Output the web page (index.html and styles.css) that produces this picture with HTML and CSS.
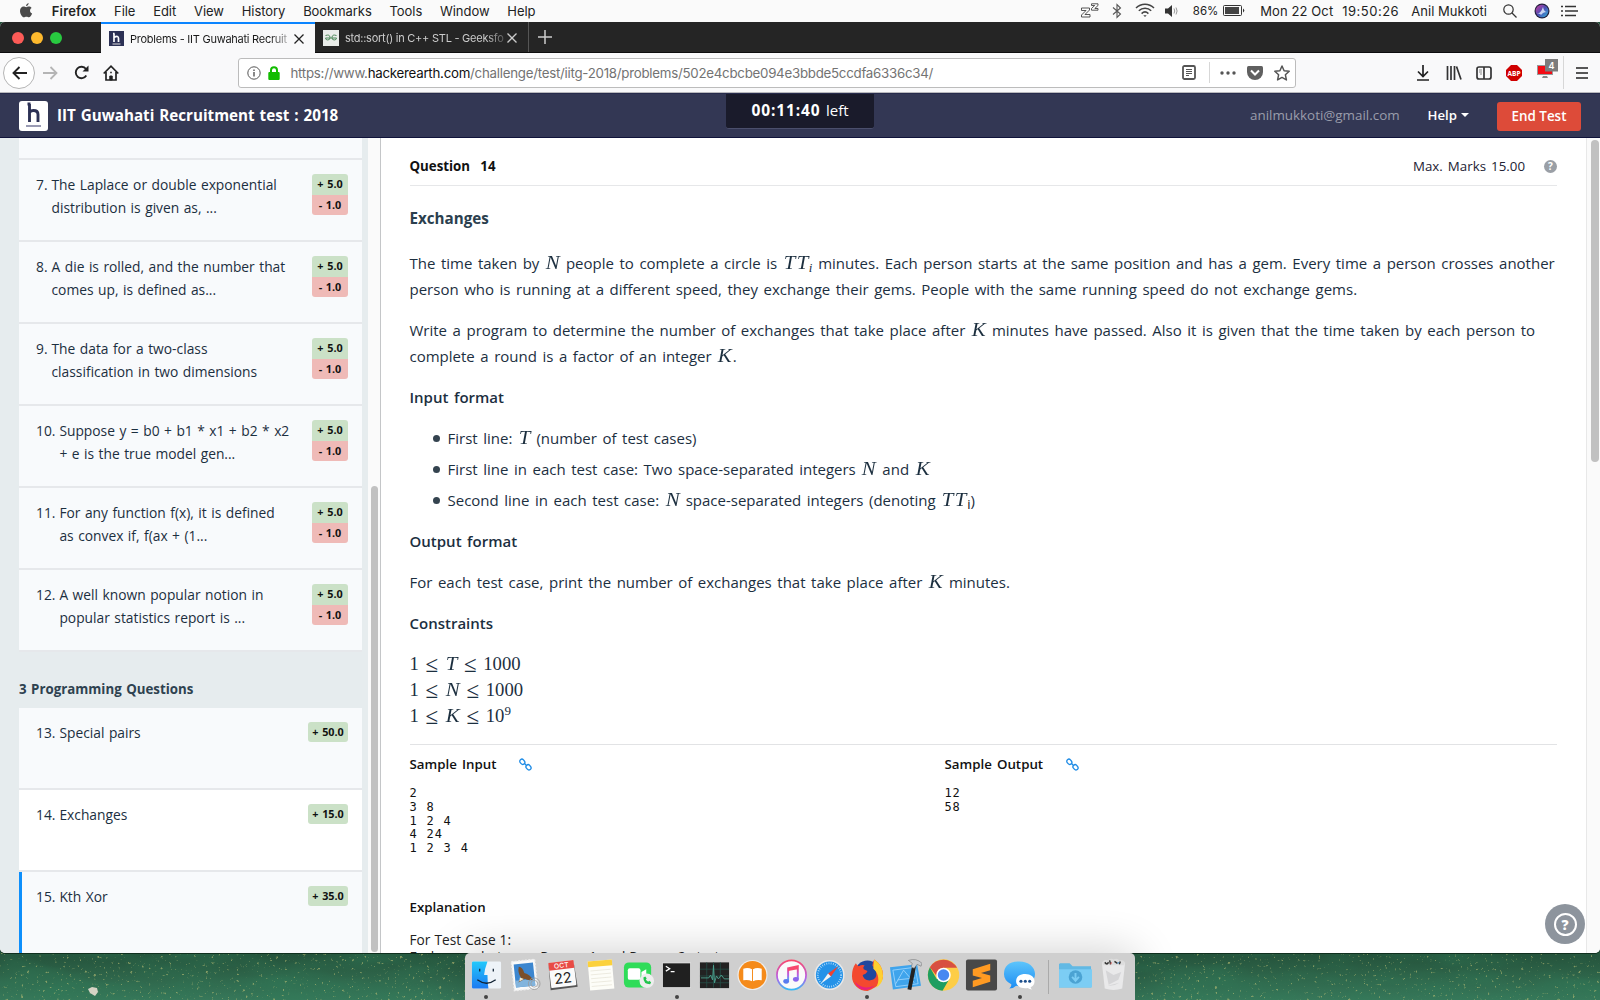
FILE: index.html
```html
<!DOCTYPE html>
<html lang="en">
<head>
<meta charset="utf-8">
<title>Problems - IIT Guwahati Recruitment test</title>
<link rel="stylesheet" href="styles.css">
</head>
<body>
<div class="desktop">
  <svg class="wallpaper" width="1600" height="47" viewBox="0 0 1600 47">
    <defs>
      <linearGradient id="green" x1="0" y1="0" x2="0" y2="1"><stop offset="0" stop-color="#24523b"/><stop offset=".35" stop-color="#2b5f45"/><stop offset="1" stop-color="#37785a"/></linearGradient>
      <filter id="specks" x="0" y="0" width="100%" height="100%"><feTurbulence type="fractalNoise" baseFrequency=".33" numOctaves="2" seed="8"/><feColorMatrix values="0 0 0 0 .5  0 0 0 0 .52  0 0 0 0 .18  7 0 0 0 -4.700"/></filter>
      <filter id="cloud" x="0" y="0" width="100%" height="100%"><feTurbulence type="fractalNoise" baseFrequency=".012 .04" numOctaves="3" seed="3"/><feColorMatrix values="0 0 0 0 .03  0 0 0 0 .2  0 0 0 0 .1  2 0 0 0 -.75"/></filter>
    </defs>
    <rect width="1600" height="47" fill="url(#green)"/>
    <rect width="1600" height="47" filter="url(#cloud)" opacity=".5"/>
    <rect width="1600" height="47" filter="url(#specks)" opacity=".6"/>
    <path d="M88 36l4-2 5 1 1 4-3 4-5-3z" fill="#d5d3c4"/>
  </svg>

  <div class="menubar">
    <svg class="apple" width="14" height="16" viewBox="0 0 14 16"><path fill="#4a4a4a" d="M9.6 0c.1 1.300-.9 2.900-2.500 3.200C6.900 1.700 8.200.300 9.600 0zM7.200 4.200c.7 0 1.500-.7 2.700-.7 1 0 2 .5 2.700 1.400-2.300 1.400-1.900 4.500.5 5.500-.5 1.400-1.900 3.900-3.200 3.900-.9 0-1.300-.5-2.500-.5s-1.600.5-2.500.5C3.300 14.400 1 10.900 1 8c0-2.800 1.800-4.400 3.500-4.400 1.100 0 2 .6 2.700.6z"/></svg>
    <b class="m m-app">Firefox</b><span class="m">File</span><span class="m">Edit</span><span class="m">View</span><span class="m">History</span><span class="m">Bookmarks</span><span class="m">Tools</span><span class="m">Window</span><span class="m">Help</span>
    <div class="status">
      <svg width="18" height="15" viewBox="0 0 18 15" fill="none" stroke="#444" stroke-width=".9"><path d="M.5 5h8v2L4 11.500h5V14H.5v-2L5 7.500H.5zM10.500.8h6.500v1.700L13.800 5.500H17v1.700h-6.500V5.500l3.200-3h-3.200z"/></svg>
      <svg width="10" height="16" viewBox="0 0 10 16" fill="none" stroke="#555" stroke-width="1.100"><path d="M1 4.500l7.500 6.500L5 14.500v-13L8.500 5 1 11.500"/></svg>
      <svg width="20" height="15" viewBox="0 0 20 15" fill="none" stroke="#444" stroke-width="1.500"><path d="M1 5c5-5 13-5 18 0M3.800 7.800c3.500-3.500 9-3.500 12.400 0M6.600 10.600c2-2 4.800-2 6.800 0"/><path d="M8.300 12.200h3.400L10 14z" fill="#444" stroke="none"/></svg>
      <svg width="14" height="12" viewBox="0 0 14 12"><path d="M0 3.500h3L7 0v12L3 8.500H0z" fill="#333"/><path d="M9 3.500q1.500 2.500 0 5M11 2.500q2.200 3.500 0 7" fill="none" stroke="#999"/></svg>
      <span class="pct">86%</span>
      <svg width="22" height="11" viewBox="0 0 22 11"><rect x=".5" y=".5" width="18" height="10" rx="1" fill="none" stroke="#333"/><rect x="2" y="2" width="14" height="7" fill="#444"/><path d="M20 3.500q2.500 2 0 4z" fill="#333"/></svg>
      <span class="m date">Mon 22 Oct</span><span class="m time">19:50:26</span><span class="m user">Anil Mukkoti</span>
      <svg width="14" height="14" viewBox="0 0 14 14" fill="none" stroke="#333" stroke-width="1.200"><circle cx="5.500" cy="5.500" r="4.700"/><path d="M9 9l4.500 4.500"/></svg>
      <svg width="16" height="16" viewBox="0 0 16 16"><defs><linearGradient id="siri" x1="0" y1="0" x2="1" y2="1"><stop offset="0" stop-color="#d33a9c"/><stop offset=".5" stop-color="#4a4fb5"/><stop offset="1" stop-color="#2fb4d8"/></linearGradient></defs><circle cx="8" cy="8" r="7.500" fill="#23213f"/><circle cx="8" cy="8" r="6.300" fill="url(#siri)"/><path d="M3 11q4-1 6-7 1 5 4 5-4 0-6 3-1-2-4-1z" fill="#e8f3ff" opacity=".8"/></svg>
      <svg width="17" height="12" viewBox="0 0 17 12" stroke="#333" stroke-width="1.500"><path d="M0 1.500h2M4 1.500h11M0 6h2M4 6h13M0 10.500h2M4 10.500h11"/></svg>
    </div>
  </div>

  <div class="window">
    <div class="tabs">
      <div class="lights"><i class="red"></i><i class="yellow"></i><i class="lime"></i></div>
      <div class="tab tab-on">
        <svg width="15" height="15" viewBox="0 0 15 15"><rect width="15" height="15" fill="#2c3155"/><path d="M5 11V2.500M4 2.500h1.500M5 6.500q4.500-2.500 4.500 1V11" fill="none" stroke="#fff" stroke-width="1.700"/><path d="M3.500 13h8" stroke="#ddd"/></svg>
        <span class="tab-t">Problems - IIT Guwahati Recruit</span>
        <svg class="x" width="10" height="10" viewBox="0 0 10 10" stroke="#222" stroke-width="1.300"><path d="M.5.5l9 9M9.500.5l-9 9"/></svg>
      </div>
      <div class="tab tab-off">
        <svg width="16" height="16" viewBox="0 0 16 16"><rect width="16" height="16" fill="#e9ece9"/><path d="M2.500 5.500q4.500-1.500 4.500 2 0 2.500-2.200 2.500T2.500 8h11q0 2-2.300 2T9 7.500q0-3.500 4.500-2" fill="none" stroke="#4f8a5c"/></svg>
        <span class="tab-t">std::sort() in C++ STL - Geeksfo</span>
        <svg class="x" width="10" height="10" viewBox="0 0 10 10" stroke="#ccc" stroke-width="1.300"><path d="M.5.5l9 9M9.500.5l-9 9"/></svg>
      </div>
      <svg class="plus" width="14" height="14" viewBox="0 0 14 14" stroke="#ccc" stroke-width="1.500"><path d="M7 0v14M0 7h14"/></svg>
    </div>

    <div class="toolbar">
      <div class="nav">
        <span class="back"><svg width="15" height="14" viewBox="0 0 15 14" fill="none" stroke="#222" stroke-width="1.900"><path d="M15 7H1.500M7.500 1l-6 6 6 6"/></svg></span>
        <svg width="15" height="14" viewBox="0 0 15 14" fill="none" stroke="#b5b5b5" stroke-width="1.800"><path d="M0 7h13.500M7.500 1l6 6-6 6"/></svg>
        <svg width="15" height="15" viewBox="0 0 15 15" fill="none" stroke="#222" stroke-width="1.900"><path d="M12.300 10.500A5.700 5.700 0 1 1 12 4"/><path d="M14.500.5v6h-6z" fill="#222" stroke="none"/></svg>
        <svg width="16" height="16" viewBox="0 0 16 16" fill="none" stroke="#222" stroke-width="1.700"><path d="M.7 8.500L8 1.200l7.300 7.300M3 7v8h10V7"/><path d="M6.800 15v-4h2.400v4z" fill="#222" stroke-width="1"/><path d="M7.200 7.500h1.600"/></svg>
      </div>
      <div class="urlbar">
        <svg width="14" height="14" viewBox="0 0 14 14" fill="none" stroke="#555"><circle cx="7" cy="7" r="6.200"/><path d="M7 6v4.500M7 3.500v1.400" stroke-width="1.400"/></svg>
        <svg class="lock" width="12" height="14" viewBox="0 0 12 14"><path d="M3 7V4.200a3 3 0 0 1 6 0V7" fill="none" stroke="#12bc00" stroke-width="2"/><rect x=".3" y="6" width="11.400" height="8" rx="1" fill="#12bc00"/></svg>
        <span class="url">https://www.<em>hackerearth.com</em>/challenge/test/iitg-2018/problems/502e4cbcbe094e3bbde5ccdfa6336c34/</span>
        <div class="url-actions">
          <svg width="14" height="15" viewBox="0 0 14 15" fill="none" stroke="#555"><rect x="1" y="1" width="12" height="13" rx="1.500" stroke-width="1.800"/><path d="M4 4.500h6M4 6.500h6M4 8.500h6M4 10.500h3"/></svg>
          <i class="vsep"></i>
          <svg width="16" height="4" viewBox="0 0 16 4" fill="#555"><circle cx="2" cy="2" r="1.700"/><circle cx="8" cy="2" r="1.700"/><circle cx="14" cy="2" r="1.700"/></svg>
          <svg width="16" height="14" viewBox="0 0 16 14"><path d="M1.500 0h13Q16 0 16 1.500V6a8 8 0 0 1-16 0V1.500Q0 0 1.500 0z" fill="#606060"/><path d="M4 4.500l4 4 4-4" fill="none" stroke="#fff" stroke-width="2"/></svg>
          <svg width="16" height="16" viewBox="0 0 16 16" fill="none" stroke="#555" stroke-width="1.500" stroke-linejoin="round"><path d="M8 1l2.100 4.700 5.100.6-3.800 3.500 1 5.100L8 12.400l-4.400 2.500 1-5.100L.8 6.300l5.100-.6z"/></svg>
        </div>
      </div>
      <div class="tools">
        <svg width="12" height="16" viewBox="0 0 12 16" fill="none" stroke="#222" stroke-width="1.700"><path d="M6 0v11M1 6.500l5 5 5-5M0 15h12"/></svg>
        <svg width="16" height="14" viewBox="0 0 16 14" fill="none" stroke="#333" stroke-width="1.700"><path d="M1.500 0v14M5 0v14M8.500 0v14M10.500.5L15 13.500"/></svg>
        <svg width="16" height="14" viewBox="0 0 16 14" fill="none" stroke="#333" stroke-width="1.700"><rect x="1" y="1" width="14" height="12" rx="2"/><path d="M8 1v12"/><path d="M3 4h3M3 6h3M4 8h2" stroke-width="1" stroke="#888"/></svg>
        <svg width="16" height="16" viewBox="0 0 16 16"><path d="M5 0h6l5 5v6l-5 5H5l-5-5V5z" fill="#d00000"/><text class="abp" x="8" y="10.600" text-anchor="middle">ABP</text></svg>
        <svg class="mon" width="22" height="22" viewBox="0 0 22 22"><rect x=".5" y="6.500" width="15" height="9" fill="#f40b14" stroke="#999"/><path d="M6 17h4l1 2H5z" fill="#888"/><rect x="8" y="0" width="13" height="12.500" fill="#7c7c7c"/><text class="count" x="14.500" y="9.600" text-anchor="middle">4</text></svg>
        <i class="vsep tall"></i>
        <svg class="burger" width="12" height="12" viewBox="0 0 12 12" stroke="#222" stroke-width="1.700"><path d="M0 1h12M0 6h12M0 11h12"/></svg>
      </div>
    </div>

    <header class="header">
      <svg class="logo" width="29" height="30" viewBox="0 0 29 30"><rect width="29" height="30" rx="3" fill="#fff"/><path d="M10.500 21V3M8.500 3h3M10.500 11.500q1-2 4-2 4.500 0 4.500 4V21" fill="none" stroke="#2c3155" stroke-width="2.900"/><path d="M7 25h15" stroke="#77789a" stroke-width="1.500"/></svg>
      <b class="h-title">IIT Guwahati Recruitment test : 2018</b>
      <div class="timer"><b>00:11:40</b> left</div>
      <div class="h-right">
        <span class="email">anilmukkoti@gmail.com</span>
        <span class="help">Help<i class="caret"></i></span>
        <span class="end">End Test</span>
      </div>
    </header>

    <div class="body">
      <aside class="side">
        <div class="cards">
          <div class="card stub"></div>
          <div class="card"><span class="num">7.</span><p>The Laplace or double exponential<br>distribution is given as, ...</p><div class="badge"><b>+ 5.0</b><b class="neg">- 1.0</b></div></div>
          <div class="card"><span class="num">8.</span><p>A die is rolled, and the number that<br>comes up, is defined as...</p><div class="badge"><b>+ 5.0</b><b class="neg">- 1.0</b></div></div>
          <div class="card"><span class="num">9.</span><p>The data for a two-class<br>classification in two dimensions</p><div class="badge"><b>+ 5.0</b><b class="neg">- 1.0</b></div></div>
          <div class="card"><span class="num">10.</span><p>Suppose y = b0 + b1 * x1 + b2 * x2<br>+ e is the true model gen...</p><div class="badge"><b>+ 5.0</b><b class="neg">- 1.0</b></div></div>
          <div class="card"><span class="num">11.</span><p>For any function f(x), it is defined<br>as convex if, f(ax + (1...</p><div class="badge"><b>+ 5.0</b><b class="neg">- 1.0</b></div></div>
          <div class="card"><span class="num">12.</span><p>A well known popular notion in<br>popular statistics report is ...</p><div class="badge"><b>+ 5.0</b><b class="neg">- 1.0</b></div></div>
          <h2 class="group">3 Programming Questions</h2>
          <div class="card"><span class="num">13.</span><p>Special pairs</p><div class="badge wide"><b>+ 50.0</b></div></div>
          <div class="card card-on"><span class="num">14.</span><p>Exchanges</p><div class="badge wide"><b>+ 15.0</b></div></div>
          <div class="card card-next"><span class="num">15.</span><p>Kth Xor</p><div class="badge wide"><b>+ 35.0</b></div></div>
        </div>
        <div class="track"><div class="thumb thumb-side"></div></div>
      </aside>

      <main class="main">
        <div class="q-head"><b>Question &nbsp;14</b><div class="marks">Max. Marks 15.00<i class="q">?</i></div></div>
        <h3 class="first">Exchanges</h3>
        <p>The time taken by <i class="v n">N</i> people to complete a circle is <i class="v t">T</i><i class="v t">T</i><sub class="v i">i</sub> minutes. Each person starts at the same position and has a gem. Every time a person crosses another<br>person who is running at a different speed, they exchange their gems. People with the same running speed do not exchange gems.</p>
        <p>Write a program to determine the number of exchanges that take place after <i class="v n">K</i> minutes have passed. Also it is given that the time taken by each person to<br>complete a round is a factor of an integer <i class="v n">K</i>.</p>
        <h3>Input format</h3>
        <ul>
          <li>First line: <i class="v t">T</i> (number of test cases)</li>
          <li>First line in each test case: Two space-separated integers <i class="v n">N</i> and <i class="v n">K</i></li>
          <li>Second line in each test case: <i class="v n">N</i> space-separated integers (denoting <i class="v t">T</i><i class="v t">T</i><sub class="s">i</sub>)</li>
        </ul>
        <h3>Output format</h3>
        <p>For each test case, print the number of exchanges that take place after <i class="v n">K</i> minutes.</p>
        <h3>Constraints</h3>
        <p class="math">1<i class="le">≤</i><i class="v t">T</i><i class="le">≤</i>1000<br>1<i class="le">≤</i><i class="v n">N</i><i class="le">≤</i>1000<br>1<i class="le">≤</i><i class="v n">K</i><i class="le">≤</i>10<sup>9</sup></p>
        <div class="samples">
          <section><h4>Sample Input<svg width="13" height="13" viewBox="0 0 13 13" fill="none" stroke="#1f8ce6" stroke-width="1.300"><rect x="1.200" y="1" width="4.200" height="5.600" rx="2.100" transform="rotate(-40 3.300 3.800)"/><rect x="7.400" y="6.500" width="4.200" height="5.600" rx="2.100" transform="rotate(-40 9.500 9.300)"/><path d="M5 5l3 3"/></svg></h4>
<pre>2
3 8
1 2 4
4 24
1 2 3 4</pre></section>
          <section><h4>Sample Output<svg width="13" height="13" viewBox="0 0 13 13" fill="none" stroke="#1f8ce6" stroke-width="1.300"><rect x="1.200" y="1" width="4.200" height="5.600" rx="2.100" transform="rotate(-40 3.300 3.800)"/><rect x="7.400" y="6.500" width="4.200" height="5.600" rx="2.100" transform="rotate(-40 9.500 9.300)"/><path d="M5 5l3 3"/></svg></h4>
<pre>12
58</pre></section>
        </div>
        <h4 class="expl">Explanation</h4>
        <div class="cases">For Test Case 1:<br>Exchanges between Person 1 and Person 2 start</div>
      </main>
      <div class="track track-main"><div class="thumb thumb-main"></div></div>
    </div>
    <div class="fab"><span>?</span></div>
  </div>

  <div class="dock">
    <span class="app run"><svg viewBox="0 0 34 34"><defs><linearGradient id="fd" x1="0" y1="0" x2="0" y2="1"><stop offset="0" stop-color="#22c9fb"/><stop offset="1" stop-color="#1d7af2"/></linearGradient></defs><rect x="2" y="3" width="30" height="28" rx="1.500" fill="#eef3f8"/><path d="M3.500 3H18q-3 8-3.500 14H18q0 7 1 14H3.500Q2 31 2 29.500v-25Q2 3 3.500 3z" fill="url(#fd)"/><path d="M10 10.500v3M24 10.500v3M7.500 22q9.500 7 19 0" fill="none" stroke="#123" stroke-width="1.300"/></svg></span>
    <span class="app"><svg viewBox="0 0 34 34"><g transform="rotate(-6 17 17)"><rect x="5" y="2" width="24" height="30" fill="#fafafa" stroke="#eee" stroke-dasharray="2 1.500" stroke-width="1.500"/><rect x="7" y="5" width="20" height="24" fill="#3c86cf"/><path d="M7 22h20v7H7z" fill="#82b4dd"/><path d="M12 8q4 1 5 7 6 2 8 8-6 0-8-2l-7 3 3-5q-3-5-1-11z" fill="#7b4f2a"/><path d="M12 19l4 2-5 2z" fill="#f2e8cc"/></g><circle cx="27" cy="26" r="6" fill="none" stroke="#999" stroke-width=".8"/><circle cx="27" cy="26" r="3.500" fill="none" stroke="#999" stroke-width=".8"/></svg></span>
    <span class="app"><svg viewBox="0 0 34 34"><g transform="rotate(-7 17 17)"><path d="M4 4h26l1 27H3z" fill="#555"/><rect x="4" y="3" width="26" height="26" rx="1" fill="#fafafa"/><path d="M4 3h26v8H4z" fill="#e84b45"/><text class="month" x="17" y="9.600" text-anchor="middle">OCT</text><text class="day" x="17" y="25.500" text-anchor="middle">22</text></g></svg></span>
    <span class="app"><svg viewBox="0 0 34 34"><g transform="rotate(-5 17 17)"><rect x="5" y="2" width="25" height="30" fill="#fdfdf8"/><rect x="5" y="2" width="25" height="6" fill="#fbd13c"/><path d="M7 12h21M7 16h21M7 20h21M7 24h21M7 28h21" stroke="#e6e2d6" stroke-width=".7"/></g></svg></span>
    <span class="app"><svg viewBox="0 0 34 34"><rect x="2" y="4" width="28" height="26" rx="5" fill="#2fdc59"/><rect x="6" y="10" width="13" height="12" rx="2" fill="#fff"/><path d="M20 14l5-3v10l-5-3z" fill="#fff"/><circle cx="25.500" cy="23" r="7.500" fill="#eee"/><path d="M22 19.500q0 7 7 7l1-2-2-1.500-1 1q-2-1-2.500-2.500l1-1-1.500-2z" fill="#22c44d"/></svg></span>
    <span class="app run"><svg viewBox="0 0 34 34"><rect x="2" y="4" width="30" height="26.500" fill="#ddd"/><rect x="3" y="5" width="28" height="24.500" fill="#202020"/><path d="M6 8l4 2.500L6 13M11 13.500h4" fill="none" stroke="#fff" stroke-width="1.300"/></svg></span>
    <span class="app"><svg viewBox="0 0 34 34"><rect x="2" y="4" width="30" height="26.500" fill="#222"/><path d="M2 11h30M2 18h30M2 25h30M9 4v26M16 4v26M23 4v26" stroke="#245048" stroke-width=".8"/><path d="M3 20h8l2-3 2 5 1-15 1 18 2-7 2 3 3-4 3 4h5" fill="none" stroke="#4da793" stroke-width=".9"/></svg></span>
    <span class="app"><svg viewBox="0 0 34 34"><circle cx="17" cy="17" r="15.500" fill="#eee"/><circle cx="17" cy="17" r="14.300" fill="#f58b1b"/><path d="M16.500 11q-4-2-9-.5v12q5-1 9 1zM17.500 11q4-2 9-.5v12q-5-1-9 1z" fill="#fff"/></svg></span>
    <span class="app"><svg viewBox="0 0 34 34"><defs><linearGradient id="it" x1="0" y1="0" x2="0" y2="1"><stop offset="0" stop-color="#f9486c"/><stop offset=".6" stop-color="#b760e8"/><stop offset="1" stop-color="#37b9f4"/></linearGradient></defs><circle cx="17" cy="17" r="15" fill="#fafafa" stroke="url(#it)" stroke-width="1.800"/><path d="M13.500 23V10l10-2v13" fill="none" stroke="url(#it)" stroke-width="2"/><path d="M13.500 10l10-2v3l-10 2z" fill="#f9486c"/><ellipse cx="11.500" cy="23.500" rx="3" ry="2.500" fill="#5a7bf0"/><ellipse cx="21.500" cy="21.500" rx="3" ry="2.500" fill="#8a65ec"/></svg></span>
    <span class="app"><svg viewBox="0 0 34 34"><circle cx="17" cy="17" r="15.500" fill="#e8e8e8"/><circle cx="17" cy="17" r="14" fill="#2492e8"/><circle cx="17" cy="17" r="12" fill="none" stroke="#bfe2fb" stroke-dasharray=".8 1.500" stroke-width="2"/><path d="M26 8l-7.500 10.500-3-3z" fill="#f0402f"/><path d="M8 26l7.500-10.500 3 3z" fill="#f4f4f4"/></svg></span>
    <span class="app run"><svg viewBox="0 0 34 34"><circle cx="17" cy="15" r="13" fill="#20479e"/><path d="M17 33.500C8 33.500 1 27 1 18Q1 10 5 5q1 2 3 3 3-2 6-1-2 2-1 4l4 2q-1 3-5 4 1 6 8 5.500 7-1 6-8-1-5-4-7 0-4 2-6.500 9 6 9 16.500 0 9.500-16 16z" fill="#f4492f"/><path d="M24 1q9 6 9 17 0 8-8 12.500 4-5 3-11-1-6-5-9 0-5 1-9.500z" fill="#ffcf30"/><path d="M4 24q8 9 20 4-8 7-15 3-4-3-5-7z" fill="#e8207c"/></svg></span>
    <span class="app"><svg viewBox="0 0 34 34"><path d="M1 9l28-3 4 22-29 4z" fill="#3fa4ec"/><path d="M4 12l23-3 3 17-23 3zM15 12l-8 14M15 12l11 13M9 22l18-2" fill="none" stroke="#a8dbff" stroke-width=".8"/><path d="M26 7l-5 25" stroke="#222" stroke-width="4"/><path d="M20 2q8-3 14 3l-1 3-4-2-3 4-3-1 1-4z" fill="#c9ccd0" stroke="#777" stroke-width=".6"/></svg></span>
    <span class="app"><svg viewBox="0 0 34 34"><circle cx="17" cy="17" r="16.200" fill="#fdcd46"/><path d="M3 9a16.200 16.200 0 0 0 13 24.200l7-12.200L10 21z" fill="#1e9e60"/><path d="M3 9A16.200 16.200 0 0 1 31 9.500H17L10 18z" fill="#d84f40"/><circle cx="17" cy="17" r="7.500" fill="#fff"/><circle cx="17" cy="17" r="5.900" fill="#4688f1"/></svg></span>
    <span class="app"><svg viewBox="0 0 34 34"><rect x="1" y="1" width="32" height="32" rx="2" fill="#484848"/><path d="M8 11l18-5.500v6.500L16.500 15l9.500 2.500v6.500L8 29.500V23l9.500-3L8 17.500z" fill="#ff9a22"/></svg></span>
    <span class="app run"><svg viewBox="0 0 34 34"><defs><linearGradient id="ms" x1="0" y1="0" x2="0" y2="1"><stop offset="0" stop-color="#5ec5fb"/><stop offset="1" stop-color="#1c8df3"/></linearGradient></defs><path d="M17 3c9 0 16 5.500 16 13s-7 12.500-16 12.500q-2 0-3.500-.3Q11 31 6.500 31 9 29 8.500 26.500 1 23 1 16 1 3 17 3z" fill="url(#ms)"/><path d="M23 16c5.500 0 9.500 3 9.500 7.500 0 3-1.500 5-4 6q0 1.500 1.500 2.500-3 0-4.500-1.500c-7 1-12-2-12-7S17.500 16 23 16z" fill="#fff"/><g fill="#1d4f8c"><circle cx="18.500" cy="23.500" r="1.600"/><circle cx="23" cy="23.500" r="1.600"/><circle cx="27.500" cy="23.500" r="1.600"/></g></svg></span>
    <i class="dock-sep"></i>
    <span class="app"><svg viewBox="0 0 34 34"><path d="M1 5h10l3 3h19v22H0V6z" fill="#62b9e4"/><path d="M0 11h34v19H0z" fill="#7ccdf4"/><circle cx="17" cy="19" r="7" fill="#4ba3d3"/><path d="M17 15v7M13.500 19l3.500 4 3.500-4" fill="none" stroke="#7ccdf4" stroke-width="2"/></svg></span>
    <span class="app"><svg viewBox="0 0 34 34"><path d="M5 4h24l-3 27q-9 3-18 0z" fill="#e9e9ea"/><path d="M9 12l8 5 8-3-3 8-10 5zM11 28q6 1 12-3" fill="#d5d5d7"/><path d="M5 4q3-4 6-2 3-3 6-1 4-2 6 1 4-1 6 2l-1 3H6z" fill="#ddd"/><path d="M8 4l2 2M13 2l1 4M18 3l3 2M24 3l-1 3M10 6l2-2" stroke="#333" stroke-width="1.500"/><path d="M14 6l1-2" stroke="#d55"/><path d="M21 5l2-1" stroke="#38c"/></svg></span>
  </div>
</div>
</body>
</html>
```
FILE: styles.css
```css
* { box-sizing: border-box; }
body { margin: 0; width: 1600px; height: 1000px; overflow: hidden; font-family: "Open Sans", sans-serif; color: #1c2f3f; }
svg { display: block; flex: none; }
p, h2, h3, h4, ul, pre { margin: 0; padding: 0; font-weight: 400; }

.desktop { position: relative; width: 1600px; height: 1000px; display: flex; flex-direction: column; background: #24523b; }
.wallpaper { position: absolute; left: 0; bottom: 0; }

/* macOS menu bar */
.menubar { height: 22px; flex: none; display: flex; align-items: center; gap: 17.800px; padding: 0 22px 0 19px; background: #fafafa; font: 13px/20px Inter, sans-serif; letter-spacing: -.05px; color: #222; }
.menubar > * { margin-top: -1px; }
.m-app { margin-left: 1px; font-weight: 600; letter-spacing: .15px; }
.m { white-space: nowrap; }
.status { margin-left: auto; display: flex; align-items: center; }
.status > svg:nth-child(1) { margin-right: 13px; }
.status > svg:nth-child(2) { margin-right: 13px; }
.status > svg:nth-child(3) { margin-right: 10px; }
.status > svg:nth-child(4) { margin-right: 14px; }
.pct { font-size: 11.500px; margin-right: 5px; }
.date { margin-left: 15px; letter-spacing: .1px; }
.time { margin-left: 9px; letter-spacing: .5px; }
.user { margin: 0 16px 0 12px; letter-spacing: .05px; }
.status > svg:nth-last-child(2) { margin: 0 11px 0 17px; }

/* browser window */
.window { position: relative; height: 931px; flex: none; display: flex; flex-direction: column; overflow: hidden; border-radius: 5px; background: #fff; box-shadow: 0 1px 0 #10301f; }
.tabs { height: 31px; flex: none; display: flex; background: #252525; border-bottom: 1px solid #0c0c0d; }
.lights { width: 101px; display: flex; gap: 7px; padding: 10px 12px; }
.lights i { width: 12px; height: 12px; border-radius: 50%; }
.red { background: #fc5b57; }
.yellow { background: #fdb92d; }
.lime { background: #28c940; }
.tab { width: 214px; display: flex; align-items: center; padding: 0 11px 0 8px; font: 11px/14px Inter, sans-serif; letter-spacing: -.25px; }
.tab-on { height: 31px; background: #f9f9fa; border-top: 2px solid #0a84ff; color: #1a1a1a; }
.tab-off { color: #ccc; border-right: 1px solid #555; padding-top: 2px; }
.tab-t { width: 159px; margin: 0 0 0 6px; overflow: hidden; white-space: nowrap; -webkit-mask-image: linear-gradient(90deg, #000 88%, transparent 105%); mask-image: linear-gradient(90deg, #000 88%, transparent 105%); }
.x { margin-left: auto; }
.plus { margin: 8px 0 0 9px; }

.toolbar { height: 40px; flex: none; display: flex; align-items: center; background: #f9f9fa; border-bottom: 1px solid #b9b9bd; }
.nav { width: 238px; display: flex; align-items: center; padding-left: 3px; }
.back { width: 32px; height: 32px; display: flex; align-items: center; justify-content: center; border: 1px solid #b5b5b5; border-radius: 50%; background: #fff; margin-right: 8px; }
.nav > svg:nth-child(2) { margin-right: 16px; }
.nav > svg:nth-child(3) { margin-right: 14px; }
.urlbar { width: 1058px; height: 30px; display: flex; align-items: center; padding: 0 5px 0 8px; border: 1px solid #bcbcbc; border-radius: 3px; background: #fff; }
.lock { margin: 0 10.500px 0 7px; }
.url { font: 13.300px/18px Inter, sans-serif; letter-spacing: -.26px; color: #737373; white-space: nowrap; }
.url em { font-style: normal; color: #111; }
.url-actions { margin-left: auto; display: flex; align-items: center; gap: 10.800px; }
.vsep { width: 1px; height: 21px; background: #d7d7d7; margin: 0 0 0 2px; }
.tools { flex: 1; display: flex; align-items: center; }
.tools > :nth-child(1) { margin-left: 121px; }
.tools > :nth-child(2) { margin-left: 17px; }
.tools > :nth-child(3) { margin-left: 14px; }
.tools > :nth-child(4) { margin-left: 14px; }
.tools > .mon { margin: -6px 0 0 15px; }
.abp { font: 700 6.600px "Open Sans", sans-serif; fill: #fff; }
.count { font: 600 9px Inter, sans-serif; fill: #fff; }
.tall { height: 33px; margin-left: 4px; }
.burger { margin-left: 12px; }

/* test header */
.header { height: 45px; flex: none; display: flex; align-items: center; background: #333754; border-bottom: 1px solid #10133a; border-top: 1px solid #272b4c; color: #fff; position: relative; }
.logo { margin: 0 9px 0 19px; }
.h-title { font-size: 15.200px; word-spacing: 1px; white-space: nowrap; margin-top: -2px; }
.timer { position: absolute; left: 726px; top: 0; width: 148px; height: 35px; border-radius: 0 0 3px 3px; background: #1a1b2b; border-bottom: 1px solid #4b4f6c; text-align: center; font-size: 15px; line-height: 33px; white-space: nowrap; word-spacing: 1.500px; }
.timer b { font-size: 15.500px; letter-spacing: .9px; }
.h-right { margin-left: auto; display: flex; align-items: center; padding-right: 19px; font-size: 13.400px; }
.email { color: #9a9dab; margin-top: -2px; }
.help { display: flex; align-items: center; margin: -2px 28px 0 28px; font-weight: 600; font-size: 13.200px; }
.caret { border: 4.500px solid transparent; border-top-color: #fff; border-bottom: 0; margin-left: 4px; }
.end { width: 84px; height: 29px; border-radius: 3px; background: #dd4b39; text-align: center; font-weight: 600; line-height: 29px; margin-top: 1px; }

/* columns */
.body { flex: 1; min-height: 0; display: flex; }
.side { width: 381px; flex: none; display: flex; background: #e6ecee; border-right: 1px solid #c4c6c8; }
.cards { width: 343px; margin: 0 6px 0 19px; overflow: hidden; }
.card { height: 82px; flex: none; display: flex; padding: 14px 14px 0 17px; background: #f8fafc; border-bottom: 2px solid #e6e8eb; font-size: 13.800px; line-height: 23px; word-spacing: .900px; white-space: nowrap; }
.card > span, .card > p { margin-top: -1px; }
.stub { height: 22px; }
.num { margin-right: 4px; }
.badge { margin-left: auto; width: 36px; height: 41px; border-radius: 3px; overflow: hidden; font-size: 10.800px; line-height: 20px; text-align: center; color: #111; }
.badge b { display: block; height: 20.500px; background: #cbe1c7; }
.badge .neg { background: #efbab7; }
.badge.wide { width: 40px; height: 20px; }
.group { height: 56px; padding-top: 26px; font-size: 13.300px; line-height: 23px; word-spacing: 1px; font-weight: 700; color: #2e4250; }
.card-on { background: #fff; }
.card-next { border-left: 3px solid #0d8ffb; padding-left: 14px; height: 90px; }
.track { width: 12px; background: #fafafa; display: flex; justify-content: center; }
.thumb { width: 7px; border-radius: 4px; background: #c1c1c1; }
.thumb-side { height: 466px; margin-top: 348px; }

.main { flex: 1; min-width: 0; padding: 0 29px 0 28.500px; font-size: 15px; line-height: 26px; word-spacing: 1.650px; white-space: nowrap; overflow: hidden; }
.q-head { height: 48px; display: flex; justify-content: space-between; align-items: center; padding-top: 9px; border-bottom: 1px solid #e6e7e9; font-size: 13.300px; color: #111; }
.marks { display: flex; align-items: center; color: #223; }
.q { width: 13px; height: 13px; border-radius: 50%; background: #9a9fa6; color: #fff; font: 700 10px/13px "Open Sans", sans-serif; text-align: center; margin-left: 19px; }
.main h3, .main p, .main ul { margin-bottom: 15px; }
.main h3 { font-size: 15px; font-weight: 600; }
.main h3.first { margin: 19px 0 19px; font-weight: 700; color: #2b3f4e; font-size: 15.200px; }
ul { list-style: none; }
li { height: 26px; padding-left: 38px; margin-bottom: 5px; position: relative; }
li::before { content: ""; position: absolute; left: 23px; top: 10px; width: 7px; height: 7px; border-radius: 50%; background: #34434f; }
.v { display: inline-block; font: italic 18.200px/16px "Liberation Serif", serif; }
.n { transform: scaleX(1.150); width: 15.500px; text-align: center; }
.t { width: 13px; text-align: center; transform: scaleX(1.150); }
.i { font-size: 13px; line-height: 4px; width: 4px; vertical-align: -3px; }
.s { font-size: 13px; color: #111; line-height: 0; vertical-align: -3px; }
.math { height: 78px; font: 18.700px/26px "Liberation Serif", serif; }
.le { font: 23px/16px "Liberation Serif", serif; display: inline-block; width: 25.700px; text-align: center; vertical-align: -2px; }
.math sup { font-size: 13px; line-height: 0; vertical-align: 7px; }
.samples { display: grid; grid-template-columns: 535px 1fr; border-top: 1px solid #e2e3e5; padding-top: 6px; height: 150px; }
h4 { display: flex; align-items: center; gap: 23px; font-size: 13.300px; font-weight: 600; color: #111; }
pre { font: 12px/13.800px "DejaVu Sans Mono", monospace; letter-spacing: .9px; word-spacing: .8px; color: #111; padding-top: 10px; }
.expl { font-size: 13.300px; }
.cases { font-size: 13.700px; line-height: 17px; padding-top: 11px; word-spacing: .5px; color: #222; }
.track-main { width: 14px; border-left: 1px solid #e8e8e8; padding-left: 2px; }
.thumb-main { width: 8px; height: 322px; margin-top: 2px; }
.fab { position: absolute; left: 1545px; top: 882px; width: 40px; height: 40px; border-radius: 50%; background: #8d949d; display: flex; align-items: center; justify-content: center; }
.fab span { width: 23px; height: 23px; border: 2px solid #fff; border-radius: 50%; color: #fff; font-weight: 800; font-size: 14px; line-height: 19px; text-align: center; }

/* dock */
.dock { position: absolute; left: 465px; top: 953px; width: 670px; height: 47px; display: flex; padding: 5px 5px 0 4px; gap: 4.150px; border-radius: 5px 5px 0 0; background: #cfcfcf; box-shadow: 0 0 45px rgba(0,0,0,.2); }
.app { width: 34px; flex: none; display: flex; flex-direction: column; align-items: center; gap: 3px; }
.app svg { width: 33px; height: 34px; }
.month { font: 500 7px Inter, sans-serif; fill: #fff; }
.day { font: 15px Inter, sans-serif; fill: #222; }
.run::after { content: ""; width: 4px; height: 4px; border-radius: 50%; background: #444; }
.dock-sep { width: 1px; flex: none; height: 34px; margin: 2px 5px 0 7px; background: #aaa; }
```
